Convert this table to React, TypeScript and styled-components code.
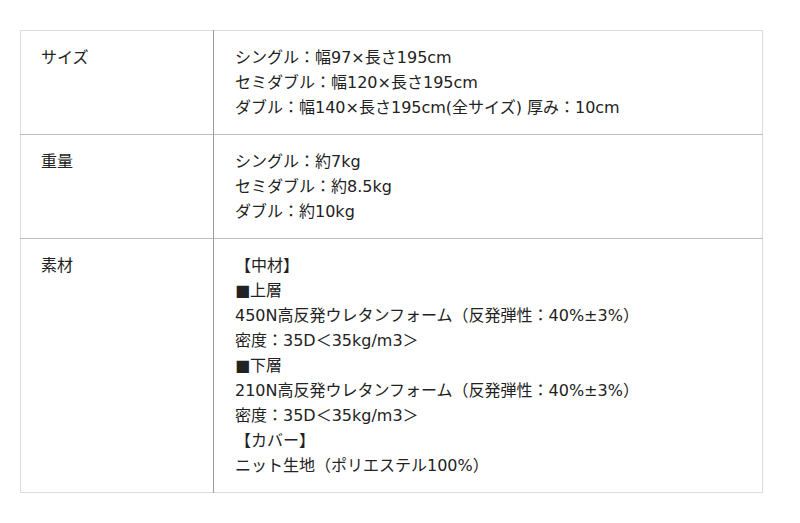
import styled, { createGlobalStyle } from "styled-components";

const GlobalStyle = createGlobalStyle`
  body {
    margin: 0;
    background: #fff;
    font-family: "DejaVu Sans", "Noto Sans CJK JP", sans-serif;
    color: #222;
  }
`;

const Page = styled.div`
  padding: 30px 0 0 20px;
`;

const SpecTable = styled.table`
  width: 743px;
  border-collapse: collapse;
  border: 1px solid #dcdcdc;
  font-size: 16px;
  line-height: 25px;
`;

const Row = styled.tr`
  border-top: 1px solid #bdbdbd;

  &:first-child {
    border-top: 1px solid #dcdcdc;
  }
`;

const Label = styled.th`
  width: 172px;
  padding: 14px 0 14px 20px;
  text-align: left;
  vertical-align: top;
  font-weight: normal;
  border-right: 1px solid #9a9a9a;
`;

const Value = styled.td`
  padding: 14px 20px 14px 21px;
  vertical-align: top;
`;

const Line = styled.div`
  white-space: nowrap;
`;

const specs = [
  {
    label: "サイズ",
    lines: [
      "シングル：幅97×長さ195cm",
      "セミダブル：幅120×長さ195cm",
      "ダブル：幅140×長さ195cm(全サイズ) 厚み：10cm",
    ],
  },
  {
    label: "重量",
    lines: ["シングル：約7kg", "セミダブル：約8.5kg", "ダブル：約10kg"],
  },
  {
    label: "素材",
    lines: [
      "【中材】",
      "■上層",
      "450N高反発ウレタンフォーム（反発弾性：40%±3%）",
      "密度：35D＜35kg/m3＞",
      "■下層",
      "210N高反発ウレタンフォーム（反発弾性：40%±3%）",
      "密度：35D＜35kg/m3＞",
      "【カバー】",
      "ニット生地（ポリエステル100%）",
    ],
  },
];

export default function App() {
  return (
    <Page>
      <GlobalStyle />
      <SpecTable>
        <tbody>
          {specs.map((spec) => (
            <Row key={spec.label}>
              <Label>{spec.label}</Label>
              <Value>
                {spec.lines.map((line, i) => (
                  <Line key={i}>{line}</Line>
                ))}
              </Value>
            </Row>
          ))}
        </tbody>
      </SpecTable>
    </Page>
  );
}
